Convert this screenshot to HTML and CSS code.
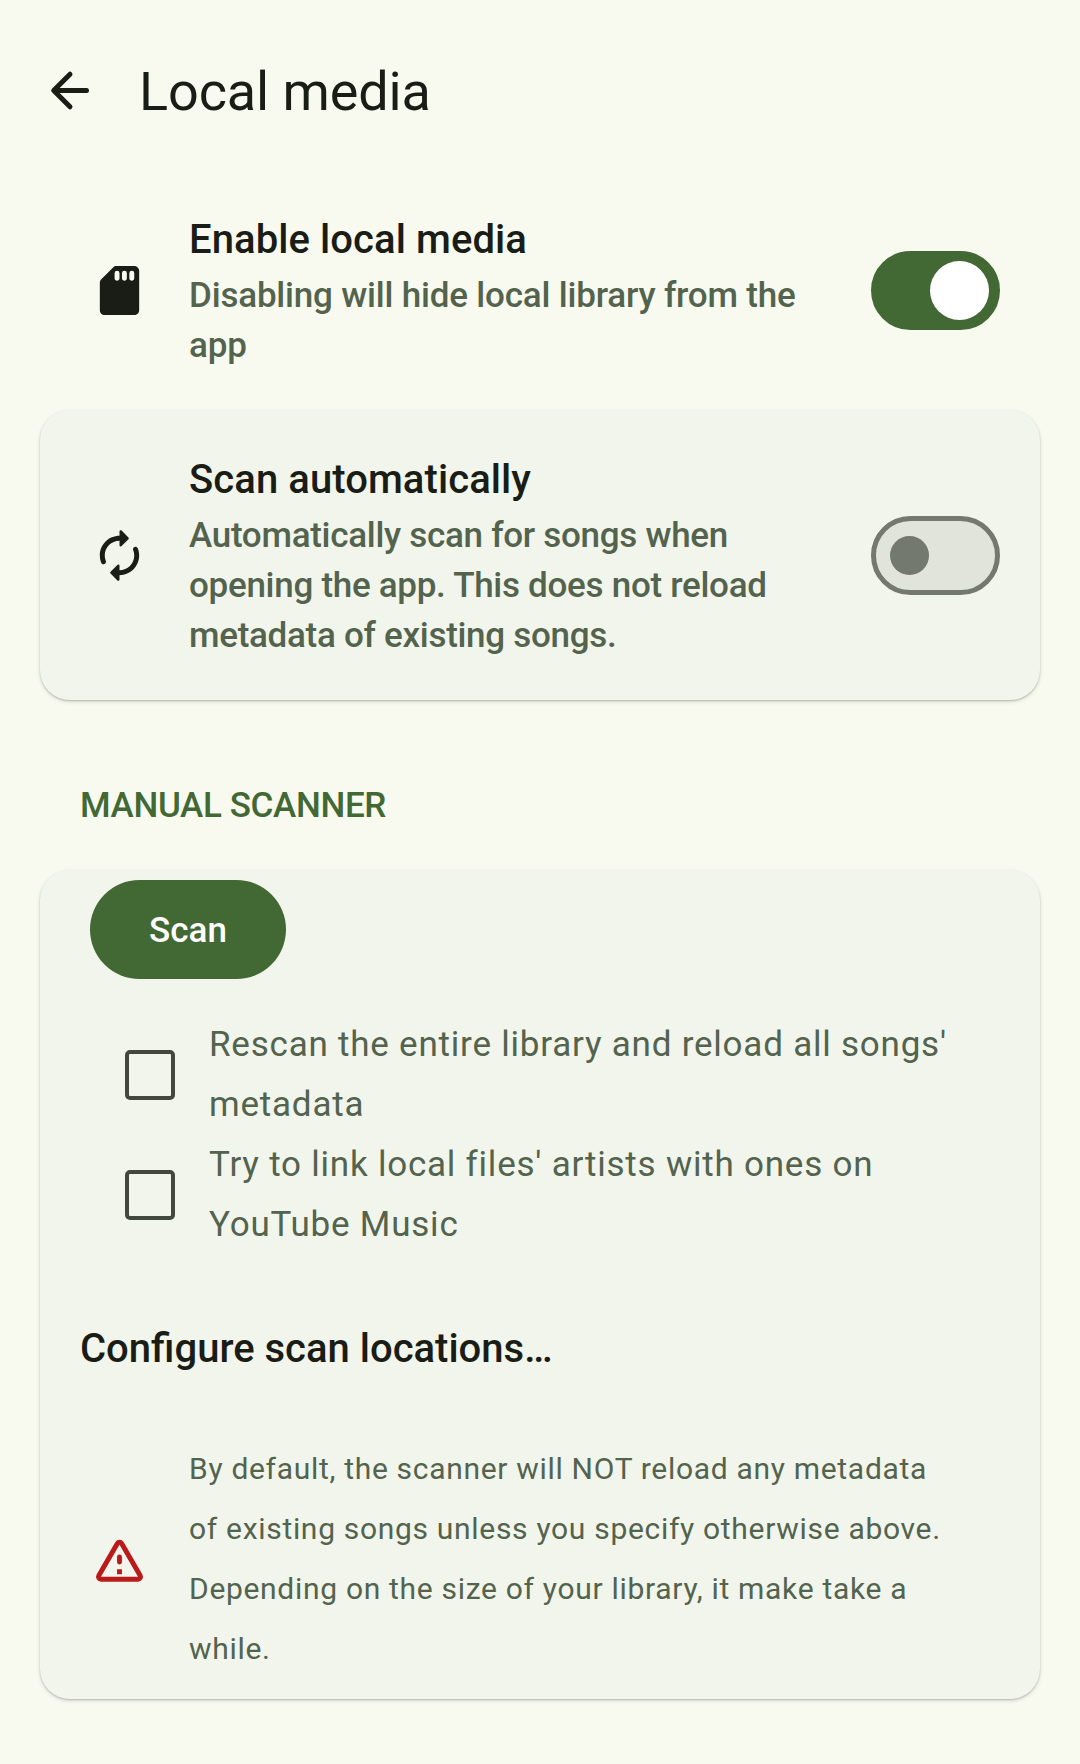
FILE: index.html
```html
<!DOCTYPE html>
<html lang="en">
<head>
<meta charset="utf-8">
<title>Local media</title>
<link rel="stylesheet" href="styles.css">
</head>
<body>
<header class="top-bar">
  <svg class="back" viewBox="0 0 48 48" fill="none" stroke="currentColor" stroke-width="5" stroke-linecap="round" stroke-linejoin="round"><path d="M40.500 24.500H8M24 8.200L7.700 24.500 24 40.800"/></svg>
  <h1>Local media</h1>
</header>
<main>
  <section class="row enable">
    <svg class="icon" viewBox="0 0 24 24" fill="currentColor"><path fill-rule="evenodd" d="M18 2h-7.200c-.5 0-1 .2-1.400.6L4.600 7.400c-.4.4-.6.900-.6 1.400V20c0 1.100.9 2 2 2h12c1.100 0 2-.9 2-2V4c0-1.100-.9-2-2-2zM11 8c-.55 0-1-.45-1-1V5a1 1 0 0 1 2 0v2c0 .55-.45 1-1 1zm3 0c-.55 0-1-.45-1-1V5a1 1 0 0 1 2 0v2c0 .55-.45 1-1 1zm3 0c-.55 0-1-.45-1-1V5a1 1 0 0 1 2 0v2c0 .55-.45 1-1 1z"/></svg>
    <div class="copy"><h2>Enable local media</h2><p>Disabling will hide local library from the<br>app</p></div>
    <span class="switch on"></span>
  </section>
  <section class="row card scan-auto">
    <svg class="icon" viewBox="0 0 24 24" fill="currentColor"><path d="M12 6v1.790c0 .45.54.67.85.35l2.790-2.790c.2-.2.2-.51 0-.71l-2.790-2.790c-.31-.31-.85-.09-.85.36V4c-4.420 0-8 3.580-8 8 0 1.040.2 2.040.57 2.950.27.67 1.130.85 1.640.34.27-.27.38-.68.23-1.040C6.150 13.560 6 12.790 6 12c0-3.310 2.690-6 6-6zm5.790 2.710c-.27.27-.38.69-.23 1.040.28.7.44 1.460.44 2.250 0 3.310-2.690 6-6 6v-1.790c0-.45-.54-.67-.85-.35l-2.790 2.790c-.2.2-.2.51 0 .71l2.790 2.790c.31.31.85.09.85-.35V20c4.420 0 8-3.580 8-8 0-1.040-.2-2.040-.57-2.950-.27-.67-1.130-.85-1.640-.34z"/></svg>
    <div class="copy"><h2>Scan automatically</h2><p>Automatically scan for songs when<br>opening the app. This does not reload<br>metadata of existing songs.</p></div>
    <span class="switch"></span>
  </section>
  <h3>MANUAL SCANNER</h3>
  <section class="card manual">
    <button class="scan">Scan</button>
    <label class="option"><span class="box"></span><span class="label">Rescan the entire library and reload all songs'<br>metadata</span></label>
    <label class="option"><span class="box"></span><span class="label">Try to link local files' artists with ones on<br>YouTube Music</span></label>
    <h2 class="configure">Configure scan locations…</h2>
    <div class="notice">
      <svg class="icon warn" viewBox="0 0 24 24"><path fill="none" stroke="currentColor" stroke-width="2" stroke-linejoin="round" d="M4.470 20h15.060c.77 0 1.250-.83.870-1.500L12.870 5.490c-.38-.67-1.350-.67-1.740 0L3.600 18.500c-.38.67.1 1.500.87 1.500z"/><path fill="currentColor" d="M12 14c-.55 0-1-.45-1-1v-2a1 1 0 0 1 2 0v2c0 .55-.45 1-1 1zm-1 2h2v2h-2z"/></svg>
      <p>By default, the scanner will NOT reload any metadata<br>of existing songs unless you specify otherwise above.<br>Depending on the size of your library, it make take a<br>while.</p>
    </div>
  </section>
</main>
</body>
</html>
```
FILE: styles.css
```css
* { box-sizing: border-box; }
body { margin: 0; height: 1764px; background: #f8faf0; color: #191d16; font-family: Roboto, sans-serif; }
h1, h2, h3, p { margin: 0; }
.top-bar { height: 180px; padding: 0 46px; display: flex; align-items: center; gap: 45px; }
.back { width: 48px; height: 48px; }
h1 { padding-top: 3px; font-size: 54px; font-weight: 400; line-height: 72px; letter-spacing: -.1px; }
main { padding: 0 40px; }
.row { display: flex; align-items: center; padding: 0 40px; }
.enable { height: 220px; margin-bottom: 10px; }
.icon { width: 59px; height: 59px; margin: 0 40px 0 10px; flex: none; }
.copy { flex: 1; margin-top: 1px; white-space: nowrap; }
h2 { font-size: 40px; font-weight: 500; line-height: 60px; }
.copy h2 { letter-spacing: .08px; }
.copy p { padding-top: 1px; font-size: 35px; font-weight: 500; line-height: 50px; letter-spacing: -.29px; color: #53634e; }
.enable .copy p { letter-spacing: -.19px; }
.card { background: #f2f5eb; border-radius: 30px; box-shadow: 0 1px 2px rgba(0,0,0,.2), 0 2px 4px rgba(0,0,0,.1); }
.scan-auto { height: 290px; }
.switch { width: 129px; height: 79px; border: 5px solid #73796e; border-radius: 40px; background: #e1e4da; display: flex; align-items: center; padding-left: 14px; }
.switch::before { content: ""; width: 39px; height: 39px; border-radius: 50%; background: #73796e; }
.on { background: #426834; border-color: #426834; padding-left: 54px; }
.on::before { width: 59px; height: 59px; background: #fff; }
h3 { font-size: 35px; font-weight: 500; line-height: 50px; letter-spacing: -.36px; color: #426834; padding: 81px 40px 39px; }
.manual { height: 829px; padding: 10px 40px 0; }
.scan { display: block; width: 196px; height: 99px; margin: 0 0 35px 10px; padding: 2px 0 0; border: 0; border-radius: 50px; background: #426834; color: #fff; font: 500 35px Roboto, sans-serif; }
.option { display: flex; align-items: center; height: 120px; padding-left: 45px; gap: 34px; font-size: 35px; line-height: 60px; letter-spacing: .78px; color: #53634e; white-space: nowrap; }
.label { padding-top: 2px; }
.box { width: 50px; height: 50px; margin-top: 2px; border: 4px solid #43483f; border-radius: 5px; }
.configure { margin-top: 65px; }
.notice { display: flex; align-items: center; margin-top: 60px; font-size: 30px; line-height: 60px; letter-spacing: .69px; color: #53634e; white-space: nowrap; }
.warn { color: #ba1a1a; }
```
